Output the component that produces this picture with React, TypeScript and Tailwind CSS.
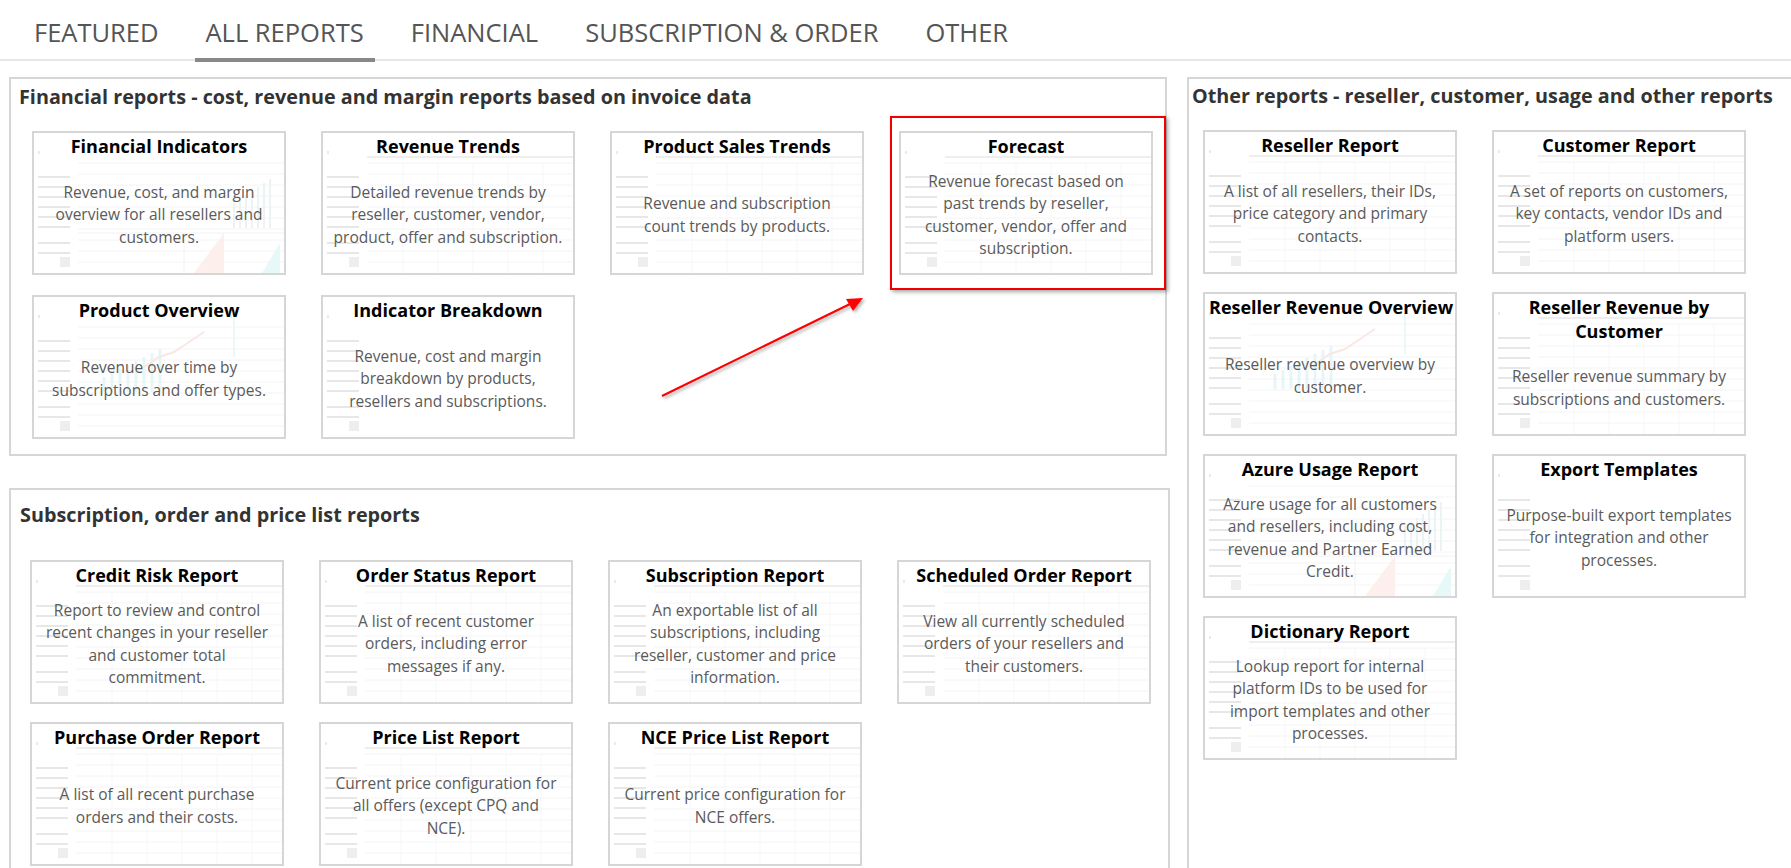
import React from "react";

type Report = {
  title: string[];
  lines: string[];
  bg?: "chart" | "table" | "bars" | "plain";
};

const financial: Report[] = [
  {
    title: ["Financial Indicators"],
    lines: ["Revenue, cost, and margin", "overview for all resellers and", "customers."],
    bg: "chart",
  },
  {
    title: ["Revenue Trends"],
    lines: ["Detailed revenue trends by", "reseller, customer, vendor,", "product, offer and subscription."],
    bg: "table",
  },
  {
    title: ["Product Sales Trends"],
    lines: ["Revenue and subscription", "count trends by products."],
    bg: "table",
  },
  {
    title: ["Forecast"],
    lines: ["Revenue forecast based on", "past trends by reseller,", "customer, vendor, offer and", "subscription."],
    bg: "table",
  },
  {
    title: ["Product Overview"],
    lines: ["Revenue over time by", "subscriptions and offer types."],
    bg: "bars",
  },
  {
    title: ["Indicator Breakdown"],
    lines: ["Revenue, cost and margin", "breakdown by products,", "resellers and subscriptions."],
    bg: "plain",
  },
];

const subscription: Report[] = [
  {
    title: ["Credit Risk Report"],
    lines: ["Report to review and control", "recent changes in your reseller", "and customer total", "commitment."],
    bg: "table",
  },
  {
    title: ["Order Status Report"],
    lines: ["A list of recent customer", "orders, including error", "messages if any."],
    bg: "table",
  },
  {
    title: ["Subscription Report"],
    lines: ["An exportable list of all", "subscriptions, including", "reseller, customer and price", "information."],
    bg: "table",
  },
  {
    title: ["Scheduled Order Report"],
    lines: ["View all currently scheduled", "orders of your resellers and", "their customers."],
    bg: "table",
  },
  {
    title: ["Purchase Order Report"],
    lines: ["A list of all recent purchase", "orders and their costs."],
    bg: "table",
  },
  {
    title: ["Price List Report"],
    lines: ["Current price configuration for", "all offers (except CPQ and", "NCE)."],
    bg: "table",
  },
  {
    title: ["NCE Price List Report"],
    lines: ["Current price configuration for", "NCE offers."],
    bg: "table",
  },
];

const other: Report[] = [
  {
    title: ["Reseller Report"],
    lines: ["A list of all resellers, their IDs,", "price category and primary", "contacts."],
    bg: "table",
  },
  {
    title: ["Customer Report"],
    lines: ["A set of reports on customers,", "key contacts, vendor IDs and", "platform users."],
    bg: "table",
  },
  {
    title: ["Reseller Revenue Overview"],
    lines: ["Reseller revenue overview by", "customer."],
    bg: "bars",
  },
  {
    title: ["Reseller Revenue by", "Customer"],
    lines: ["Reseller revenue summary by", "subscriptions and customers."],
    bg: "table",
  },
  {
    title: ["Azure Usage Report"],
    lines: ["Azure usage for all customers", "and resellers, including cost,", "revenue and Partner Earned", "Credit."],
    bg: "chart",
  },
  {
    title: ["Export Templates"],
    lines: ["Purpose-built export templates", "for integration and other", "processes."],
    bg: "plain",
  },
  {
    title: ["Dictionary Report"],
    lines: ["Lookup report for internal", "platform IDs to be used for", "import templates and other", "processes."],
    bg: "table",
  },
];

const tabs = ["FEATURED", "ALL REPORTS", "FINANCIAL", "SUBSCRIPTION & ORDER", "OTHER"];

// faded screenshot of the report behind the card text
const CardBg = ({ kind }: { kind: Report["bg"] }) => {
  const rows = [0, 1, 2, 3, 4, 5, 6, 7, 8, 9];
  return (
    <svg className="absolute inset-0 h-full w-full" viewBox="0 0 250 140" preserveAspectRatio="none">
      <g opacity="0.7">
        <rect x="4" y="18" width="2" height="3" fill="#e2e2e2" />
        {[44, 54, 64, 74, 84, 94, 110, 120].map((y) => (
          <line key={y} x1="4" x2="36" y1={y} y2={y} stroke="#dedede" strokeWidth="2" />
        ))}
        <rect x="26" y="124" width="10" height="10" fill="#e8e8e8" />
        {kind !== "plain" &&
          rows.map((r) => (
            <line key={r} x1="44" x2="250" y1={30 + r * 11} y2={30 + r * 11} stroke="#f0f0f0" strokeWidth="1" />
          ))}
        {kind === "table" &&
          [80, 115, 150, 185, 220].map((x) => (
            <line key={x} x1={x} x2={x} y1="30" y2="140" stroke="#f3f3f3" strokeWidth="1" />
          ))}
        {kind === "table" && <line x1="44" x2="250" y1="24" y2="24" stroke="#e8e8e8" strokeWidth="2" />}
        {kind === "chart" && (
          <>
            <polygon points="160,140 190,100 190,140" fill="#fde9e4" />
            <polygon points="228,140 246,110 246,140" fill="#def6f6" />
            {[200, 206, 212, 218, 224, 230, 236].map((x, i) => (
              <line key={x} x1={x} x2={x} y1={70 - i * 4} y2="95" stroke="#e3eef0" strokeWidth="2" />
            ))}
            <line x1="44" x2="250" y1="100" y2="100" stroke="#ececec" strokeWidth="1" />
            <line x1="150" x2="150" y1="100" y2="140" stroke="#ececec" strokeWidth="1" />
          </>
        )}
        {kind === "bars" && (
          <>
            {[70, 78, 86, 94, 102, 110, 118, 126].map((x, i) => (
              <line key={x} x1={x} x2={x} y1={80 - i * 4} y2="95" stroke="#dff2f5" strokeWidth="3" />
            ))}
            <polyline points="110,70 125,60 140,55 155,45 170,35" fill="none" stroke="#f7ddd8" strokeWidth="2" />
            <line x1="200" x2="200" y1="20" y2="60" stroke="#e4f4f6" strokeWidth="2" />
          </>
        )}
      </g>
    </svg>
  );
};

const Card = ({ report, highlight }: { report: Report; highlight?: boolean }) => (
  <div className="relative h-[144px] w-[254px]">
    {highlight && (
      <div className="absolute -left-[9px] -right-[13px] -top-[15px] -bottom-[15px] border-2 border-[#f00000] shadow-[2px_2px_4px_rgba(0,0,0,0.35)]" />
    )}
    <div className="relative flex h-full w-full flex-col overflow-hidden border-2 border-[#d6d6d6] bg-white">
      <CardBg kind={report.bg} />
      <div className="relative whitespace-nowrap px-1 pt-[1px] text-center text-[18px] font-bold leading-[24px] text-black">
        {report.title.map((t) => (
          <div key={t}>{t}</div>
        ))}
      </div>
      <div className="relative flex flex-1 flex-col items-center justify-center whitespace-nowrap pb-[2px] text-center text-[15.5px] leading-[22.5px] text-[#5a5a5a]">
        {report.lines.map((l) => (
          <div key={l}>{l}</div>
        ))}
      </div>
    </div>
  </div>
);

const Arrow = () => (
  <svg
    className="pointer-events-none absolute left-0 top-0 h-[868px] w-[1791px]"
    viewBox="0 0 1791 868"
  >
    <defs>
      <filter id="sh" x="-10%" y="-10%" width="130%" height="130%">
        <feDropShadow dx="2" dy="2" stdDeviation="1.5" floodColor="#000" floodOpacity="0.3" />
      </filter>
    </defs>
    <g filter="url(#sh)">
      <line x1="662" y1="396" x2="850" y2="304" stroke="#ff0000" strokeWidth="2.2" />
      <polygon points="863,298 846,299 853,311" fill="#ff0000" />
    </g>
  </svg>
);

export default function App() {
  return (
    <div className="relative h-[868px] w-full overflow-hidden bg-white font-['Open_Sans',sans-serif]">
      <nav className="flex gap-[25px] border-b-2 border-[#e6e6e6] pl-[23px]">
        {tabs.map((t) => (
          <div
            key={t}
            className={`-mb-[3px] border-b-4 px-[11px] pb-[10px] pt-[16px] text-[25.5px] leading-[32px] text-[#555] ${
              t === "ALL REPORTS" ? "border-[#888]" : "border-transparent"
            }`}
          >
            {t}
          </div>
        ))}
      </nav>

      <div className="flex gap-[17px] pl-[9px] pt-[16px]">
        <div className="flex flex-col gap-[32px]">
          <section className="h-[379px] w-[1158px] border-2 border-[#d6d6d6]">
            <h2 className="pl-[8px] pt-[4px] text-[19.8px] font-bold leading-[28px] text-[#333]">
              Financial reports - cost, revenue and margin reports based on invoice data
            </h2>
            <div className="mt-[20px] grid grid-cols-[repeat(4,254px)] gap-x-[35px] gap-y-[20px] pl-[21px]">
              {financial.map((r) => (
                <Card key={r.title[0]} report={r} highlight={r.title[0] === "Forecast"} />
              ))}
            </div>
          </section>

          <section className="h-[420px] w-[1161px] border-2 border-[#d6d6d6]">
            <h2 className="pl-[9px] pt-[11px] text-[19.8px] font-bold leading-[28px] text-[#333]">
              Subscription, order and price list reports
            </h2>
            <div className="mt-[31px] grid grid-cols-[repeat(4,254px)] gap-x-[35px] gap-y-[18px] pl-[19px]">
              {subscription.map((r) => (
                <Card key={r.title[0]} report={r} />
              ))}
            </div>
          </section>
        </div>

        <section className="h-[820px] w-[640px] shrink-0 border-2 border-[#d6d6d6]">
          <h2 className="pl-[3px] pt-[3px] text-[19.8px] font-bold leading-[28px] text-[#333]">
            Other reports - reseller, customer, usage and other reports
          </h2>
          <div className="mt-[20px] grid grid-cols-[repeat(2,254px)] gap-x-[35px] gap-y-[18px] pl-[14px]">
            {other.map((r) => (
              <Card key={r.title[0]} report={r} />
            ))}
          </div>
        </section>
      </div>

      <Arrow />
    </div>
  );
}
